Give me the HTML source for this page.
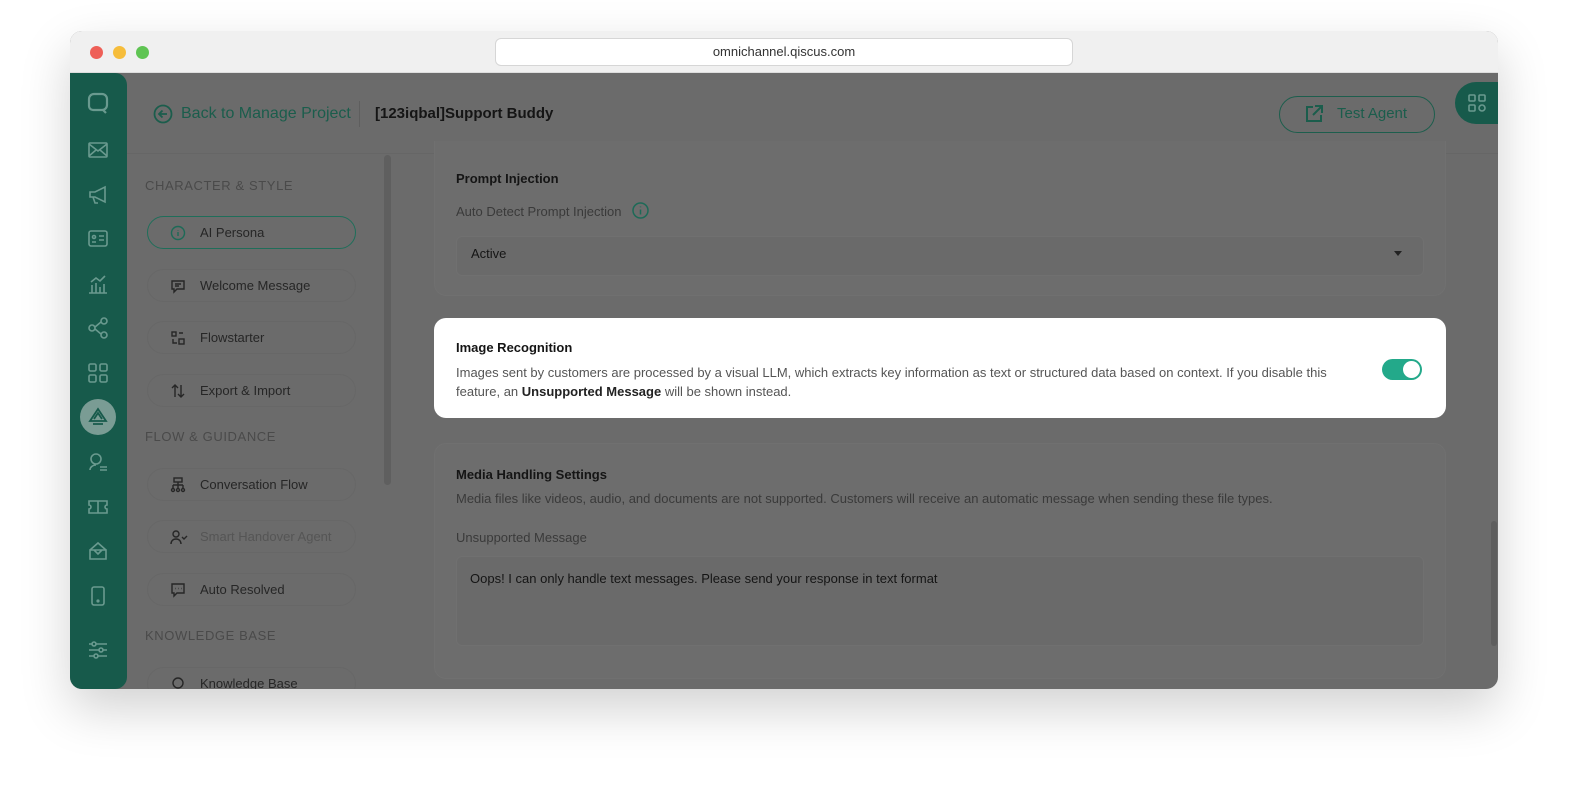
<!DOCTYPE html>
<html><head><meta charset="utf-8"><style>
*{box-sizing:border-box;margin:0;padding:0}
body{width:1580px;height:804px;background:#fff;font-family:"Liberation Sans",sans-serif;position:relative;overflow:hidden}
.win{position:absolute;left:70px;top:31px;width:1428px;height:658px;border-radius:12px;overflow:hidden;box-shadow:0 20px 50px rgba(0,0,0,.18);background:#6b6b6b}
.bar{position:absolute;left:0;top:0;width:100%;height:42px;background:#f0f0f0;border-bottom:1px solid #ddd}
.dot{position:absolute;top:15px;width:13px;height:13px;border-radius:50%}
.url{position:absolute;left:425px;top:7px;width:578px;height:28px;background:#fff;border:1px solid #d6d6d6;border-radius:6px;text-align:center;font-size:13px;line-height:26px;color:#333}
.side{position:absolute;left:0;top:42px;width:57px;height:616px;background:#175a4b;border-radius:0 12px 12px 0}
.ic{position:absolute;left:17px;width:22px;height:22px}
.a{position:absolute;white-space:nowrap}
.nav{position:absolute;left:77px;width:209px;height:33px;border:1px solid #676767;border-radius:17px;font-size:13px;color:#262626;line-height:31px;padding-left:52px}
.nav svg{position:absolute;left:22px;top:8px}
.sec{position:absolute;left:75px;font-size:13px;color:#4a4a4a;letter-spacing:.6px}
.card{position:absolute;background:#6d6d6d;border-radius:12px;border:1px solid #707070}
.t{font-size:13px;font-weight:bold;color:#151515}
.g{font-size:13px;color:#3a3a3a}
</style></head><body>
<div class="win">
 <div class="bar">
  <div class="dot" style="left:20px;background:#ee5f57"></div>
  <div class="dot" style="left:43px;background:#f6bd3b"></div>
  <div class="dot" style="left:66px;background:#5fc453"></div>
  <div class="url">omnichannel.qiscus.com</div>
 </div>
 <div class="side">
  <svg class="ic" style="top:19px" viewBox="0 0 22 22" fill="none" stroke="#6a9a8f" stroke-width="2.2"><path d="M11 2h4a5 5 0 015 5v6a5 5 0 01-5 5H6a4 4 0 01-4-4V7a5 5 0 015-5z M16 18l3 3"/></svg>
  <svg class="ic" style="top:66px" viewBox="0 0 22 22" fill="none" stroke="#6a9a8f" stroke-width="1.6"><rect x="2" y="4" width="18" height="14" rx="1"/><path d="M2 5l9 7 9-7M2 17l7-6M20 17l-7-6"/></svg>
  <svg class="ic" style="top:111px" viewBox="0 0 22 22" fill="none" stroke="#6a9a8f" stroke-width="1.6"><path d="M3 8h5l10-5v15L8 13H3z M6 13l2 6h3"/></svg>
  <svg class="ic" style="top:155px" viewBox="0 0 22 22" fill="none" stroke="#6a9a8f" stroke-width="1.6"><rect x="2" y="3" width="18" height="15" rx="2"/><circle cx="7" cy="9" r="1.5"/><path d="M5 14h4M12 8h5M12 12h5"/></svg>
  <svg class="ic" style="top:200px" viewBox="0 0 22 22" fill="none" stroke="#6a9a8f" stroke-width="1.6"><path d="M2 20h18M5 20v-8M9 20v-10M13 20v-6M17 20v-9M4 9l5-4 4 3 5-5"/></svg>
  <svg class="ic" style="top:244px" viewBox="0 0 22 22" fill="none" stroke="#6a9a8f" stroke-width="1.6"><circle cx="5" cy="11" r="3"/><circle cx="17" cy="4" r="3"/><circle cx="17" cy="18" r="3"/><path d="M8 10l6-5M8 12l6 5"/></svg>
  <svg class="ic" style="top:289px" viewBox="0 0 22 22" fill="none" stroke="#6a9a8f" stroke-width="1.6"><rect x="2" y="2" width="7" height="7" rx="1.5"/><rect x="13" y="2" width="7" height="7" rx="1.5"/><rect x="2" y="13" width="7" height="7" rx="1.5"/><rect x="13" y="13" width="7" height="7" rx="1.5"/></svg>
  <div style="position:absolute;left:10px;top:326px;width:36px;height:36px;border-radius:50%;background:#7a9c94"></div>
  <svg class="ic" style="top:333px" viewBox="0 0 22 22" fill="none" stroke="#175a4b" stroke-width="1.8"><path d="M11 3l8 12H3z M7 13l4-6 4 6M6 18h10"/></svg>
  <svg class="ic" style="top:378px" viewBox="0 0 22 22" fill="none" stroke="#6a9a8f" stroke-width="1.6"><circle cx="9" cy="8" r="5"/><path d="M3 19c0-3 3-5 6-5M13 16h7M13 19h7"/></svg>
  <svg class="ic" style="top:423px" viewBox="0 0 22 22" fill="none" stroke="#6a9a8f" stroke-width="1.6"><path d="M2 5h18v4a2 2 0 000 4v4H2v-4a2 2 0 000-4z M11 5v12"/></svg>
  <svg class="ic" style="top:467px" viewBox="0 0 22 22" fill="none" stroke="#6a9a8f" stroke-width="1.6"><path d="M3 10h16v9H3z M3 10l8-7 8 7 M7 10l4 4 4-4"/></svg>
  <svg class="ic" style="top:512px" viewBox="0 0 22 22" fill="none" stroke="#6a9a8f" stroke-width="1.6"><rect x="5" y="2" width="12" height="18" rx="2"/><circle cx="11" cy="16" r=".8"/></svg>
  <svg class="ic" style="top:566px" viewBox="0 0 22 22" fill="none" stroke="#6a9a8f" stroke-width="1.6"><path d="M2 5h18M2 11h18M2 17h18"/><circle cx="7" cy="5" r="2" fill="#175a4b"/><circle cx="14" cy="11" r="2" fill="#175a4b"/><circle cx="9" cy="17" r="2" fill="#175a4b"/></svg>
 </div>
 <!-- header -->
 <svg style="position:absolute;left:83px;top:73px" width="20" height="20" viewBox="0 0 20 20" fill="none" stroke="#1b5d4c" stroke-width="1.8"><circle cx="10" cy="10" r="8.5"/><path d="M14 10H6M9.5 6.5L6 10l3.5 3.5"/></svg>
 <div class="a" style="left:111px;top:74px;font-size:16px;color:#1b5d4c">Back to Manage Project</div>
 <div style="position:absolute;left:289px;top:70px;width:1px;height:26px;background:#5e5e5e"></div>
 <div class="a" style="left:305px;top:74px;font-size:15px;font-weight:bold;color:#151515">[123iqbal]Support Buddy</div>
 <div style="position:absolute;left:1209px;top:65px;width:156px;height:37px;border:1px solid #1d5e4d;border-radius:19px"></div>
 <svg style="position:absolute;left:1234px;top:73px" width="20" height="20" viewBox="0 0 20 20" fill="none" stroke="#1b5d4c" stroke-width="2"><path d="M9 3H3v14h14v-6M11 2h7v7M18 2L9 11"/></svg>
 <div class="a" style="left:1267px;top:74px;font-size:15px;color:#1b5d4c">Test Agent</div>
 <div style="position:absolute;left:1385px;top:51px;width:60px;height:42px;background:#175a4b;border-radius:21px 0 0 21px"></div>
 <svg style="position:absolute;left:1398px;top:63px" width="18" height="18" viewBox="0 0 18 18" fill="none" stroke="#6a9a8f" stroke-width="1.6"><rect x="1" y="1" width="6" height="6" rx="1"/><rect x="11" y="1" width="6" height="6" rx="1"/><rect x="1" y="11" width="6" height="6" rx="1"/><circle cx="14" cy="14" r="3"/></svg>
 <div style="position:absolute;left:57px;top:122px;width:1371px;height:1px;background:#666"></div>
 <!-- left nav -->
 <div style="position:absolute;left:314px;top:124px;width:7px;height:330px;background:#5f5f5f;border-radius:4px"></div>
 <div class="sec" style="top:147px">CHARACTER &amp; STYLE</div>
 <div class="nav" style="top:185px;border-color:#1f6e5a">AI Persona<svg width="16" height="16" viewBox="0 0 16 16" fill="none" stroke="#1d6a57" stroke-width="1.4"><circle cx="8" cy="8" r="6.5"/><path d="M8 7v4M8 5v.5"/></svg></div>
 <div class="nav" style="top:238px">Welcome Message<svg width="16" height="16" viewBox="0 0 16 16" fill="none" stroke="#262626" stroke-width="1.4"><path d="M2 3h12v8H7l-3 3v-3H2z M5 6h6M5 8h4"/></svg></div>
 <div class="nav" style="top:290px">Flowstarter<svg width="16" height="16" viewBox="0 0 16 16" fill="none" stroke="#262626" stroke-width="1.4"><rect x="2" y="2" width="4" height="4"/><rect x="9" y="9" width="5" height="5"/><path d="M9 3h4M3 9v4h4"/></svg></div>
 <div class="nav" style="top:343px">Export &amp; Import<svg width="16" height="16" viewBox="0 0 16 16" fill="none" stroke="#262626" stroke-width="1.4"><path d="M5 14V2M2 5l3-3 3 3M11 2v12M8 11l3 3 3-3"/></svg></div>
 <div class="sec" style="top:398px">FLOW &amp; GUIDANCE</div>
 <div class="nav" style="top:437px">Conversation Flow<svg width="16" height="16" viewBox="0 0 16 16" fill="none" stroke="#262626" stroke-width="1.4"><rect x="4" y="1" width="8" height="4"/><path d="M8 5v3M3 8h10M3 8v3M8 8v3M13 8v3"/><circle cx="3" cy="13" r="1.5"/><circle cx="8" cy="13" r="1.5"/><circle cx="13" cy="13" r="1.5"/></svg></div>
 <div class="nav" style="top:489px;color:#555">Smart Handover Agent<svg width="18" height="16" viewBox="0 0 18 16" fill="none" stroke="#262626" stroke-width="1.4"><circle cx="6" cy="5" r="3"/><path d="M1 15c0-3 2-5 5-5s5 2 5 5M12 8l2 2 3-3"/></svg></div>
 <div class="nav" style="top:542px">Auto Resolved<svg width="16" height="16" viewBox="0 0 16 16" fill="none" stroke="#262626" stroke-width="1.4"><path d="M2 2h12v9H7l-3 3v-3H2z M5 6.5h.5M8 6.5h.5M11 6.5h.5"/></svg></div>
 <div class="sec" style="top:597px">KNOWLEDGE BASE</div>
 <div class="nav" style="top:636px">Knowledge Base<svg width="16" height="16" viewBox="0 0 16 16" fill="none" stroke="#262626" stroke-width="1.4"><circle cx="8" cy="7" r="5"/><path d="M6 14h4"/></svg></div>
 <!-- content -->
 <div style="position:absolute;left:1421px;top:490px;width:6px;height:125px;background:#5e5e5e;border-radius:3px"></div>
 <div class="card" style="left:364px;top:110px;width:1012px;height:155px;border-top:none;border-radius:0 0 12px 12px"></div>
 <div class="a t" style="left:386px;top:140px">Prompt Injection</div>
 <div class="a g" style="left:386px;top:173px">Auto Detect Prompt Injection</div>
 <svg style="position:absolute;left:562px;top:171px" width="17" height="17" viewBox="0 0 17 17" fill="none" stroke="#1d6a57" stroke-width="1.5"><circle cx="8.5" cy="8.5" r="7.5"/><path d="M8.5 7.5v5M8.5 4.5v.8"/></svg>
 <div style="position:absolute;left:386px;top:205px;width:968px;height:40px;background:#6a6a6a;border-radius:6px;border:1px solid #707070"></div>
 <div class="a" style="left:401px;top:215px;font-size:13px;color:#151515">Active</div>
 <div style="position:absolute;left:1324px;top:220px;border:4px solid transparent;border-top:5px solid #222"></div>
 <div style="position:absolute;left:364px;top:287px;width:1012px;height:100px;background:#fff;border-radius:12px"></div>
 <div class="a t" style="left:386px;top:309px">Image Recognition</div>
 <div class="a g" style="left:386px;top:332px;line-height:19px;color:#555;white-space:normal;width:900px">Images sent by customers are processed by a visual LLM, which extracts key information as text or structured data based on context. If you disable this feature, an <b style="color:#222">Unsupported Message</b> will be shown instead.</div>
 <div style="position:absolute;left:1312px;top:328px;width:40px;height:21px;background:#23a98a;border-radius:11px"><div style="position:absolute;right:2px;top:2px;width:17px;height:17px;background:#fff;border-radius:50%"></div></div>
 <div class="card" style="left:364px;top:412px;width:1012px;height:236px"></div>
 <div class="a t" style="left:386px;top:436px">Media Handling Settings</div>
 <div class="a g" style="left:386px;top:460px">Media files like videos, audio, and documents are not supported. Customers will receive an automatic message when sending these file types.</div>
 <div class="a g" style="left:386px;top:499px">Unsupported Message</div>
 <div style="position:absolute;left:386px;top:525px;width:968px;height:90px;background:#6a6a6a;border-radius:6px;border:1px solid #707070"></div>
 <div class="a" style="left:400px;top:540px;font-size:13px;color:#151515">Oops! I can only handle text messages. Please send your response in text format</div>
</div>
</body></html>
